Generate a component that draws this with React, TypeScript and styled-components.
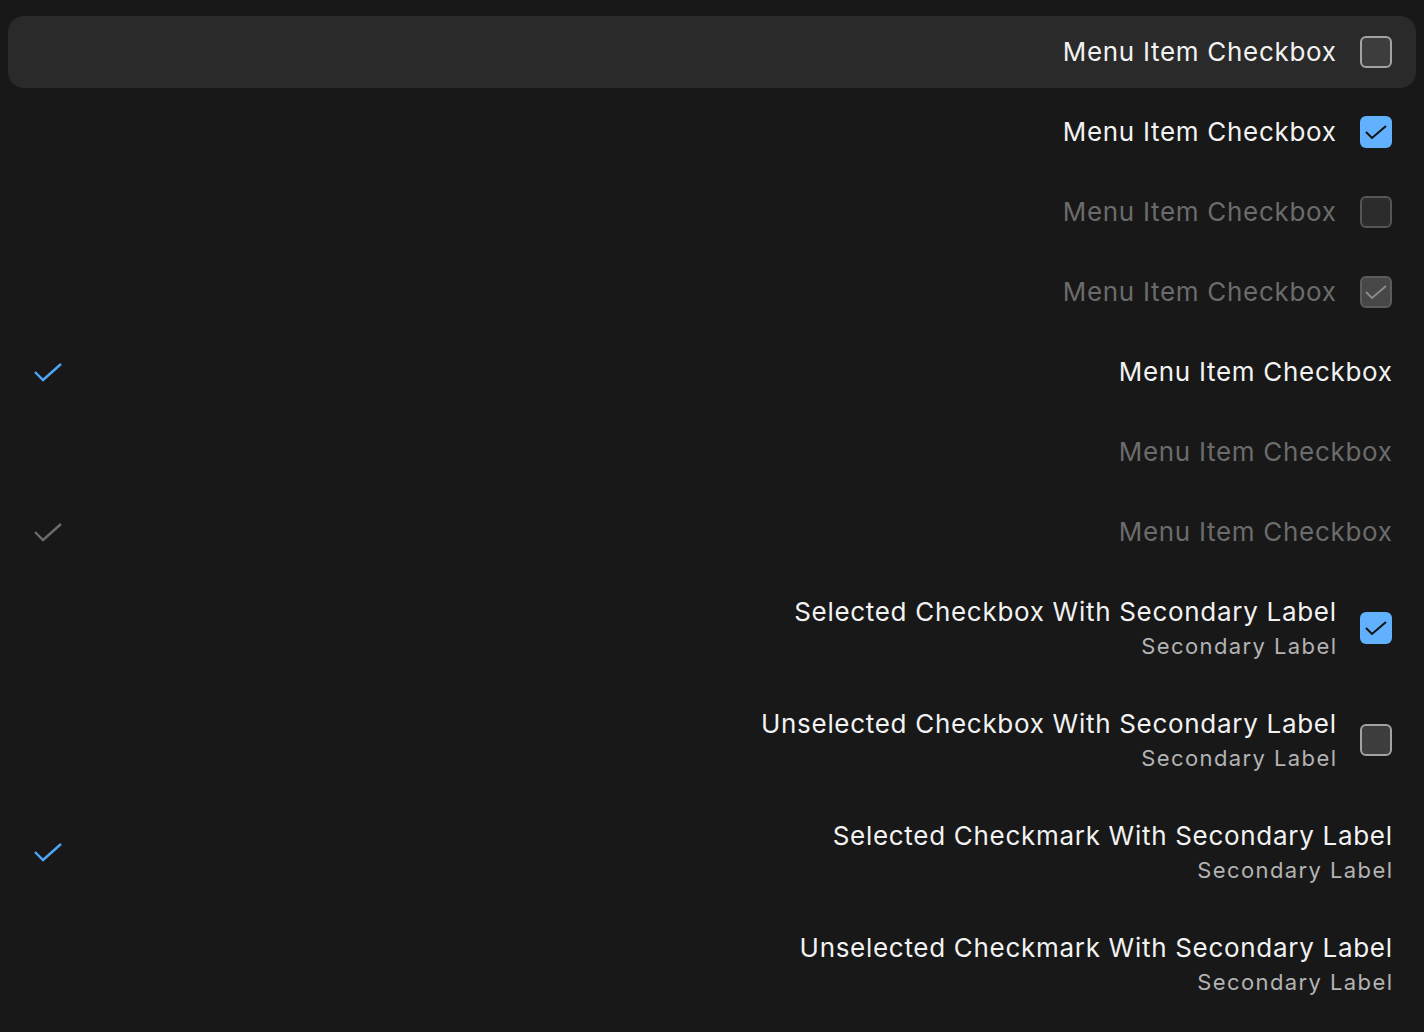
import React from "react";
import styled, { createGlobalStyle, css } from "styled-components";

const GlobalStyle = createGlobalStyle`
  html, body {
    margin: 0;
    padding: 0;
    background: #181818;
  }
  body {
    font-family: Inter, "Noto Sans", sans-serif;
  }
`;

const Menu = styled.div`
  display: flex;
  flex-direction: column;
  gap: 8px;
  padding: 16px 8px;
  min-height: 100vh;
  box-sizing: border-box;
  background: #181818;
`;

const Row = styled.div<{ $hover?: boolean; $tall?: boolean }>`
  display: flex;
  align-items: center;
  height: ${(p) => (p.$tall ? 104 : 72)}px;
  padding: 0 24px;
  border-radius: 16px;
  gap: 24px;
  ${(p) =>
    p.$hover &&
    css`
      background: #2a2a2a;
    `}
`;

const Lead = styled.div`
  width: 32px;
  height: 32px;
  flex: none;
  display: flex;
  align-items: center;
  justify-content: center;
`;

const Labels = styled.div`
  flex: 1;
  display: flex;
  flex-direction: column;
  align-items: flex-end;
  text-align: right;
`;

const Primary = styled.span<{ $disabled?: boolean }>`
  font-size: 26px;
  line-height: 36px;
  letter-spacing: 0.7px;
  margin-right: -0.7px;
  color: ${(p) => (p.$disabled ? "#6b6b6b" : "#f2f2f2")};
`;

const Secondary = styled.span`
  font-size: 22px;
  line-height: 32px;
  letter-spacing: 1.4px;
  margin-right: -1.4px;
  color: #b3b3b3;
`;

const Box = styled.div<{ $checked?: boolean; $disabled?: boolean }>`
  width: 32px;
  height: 32px;
  flex: none;
  box-sizing: border-box;
  border-radius: 6px;
  display: flex;
  align-items: center;
  justify-content: center;
  ${(p) => {
    if (p.$checked && !p.$disabled)
      return css`
        background: #62b1ff;
      `;
    if (p.$checked && p.$disabled)
      return css`
        background: #474747;
        border: 2px solid #5c5c5c;
      `;
    if (p.$disabled)
      return css`
        background: #2c2c2c;
        border: 2px solid #555555;
      `;
    return css`
      background: #3d3d3d;
      border: 2px solid #a3a3a3;
    `;
  }}
`;

const BoxCheck = ({ color }: { color: string }) => (
  <svg width="32" height="32" viewBox="0 0 32 32" style={{ flex: "none", margin: -2 }}>
    <path d="M6 16 L12 22 L26 10" fill="none" stroke={color} strokeWidth="2" />
  </svg>
);

const Mark = ({ color }: { color: string }) => (
  <svg width="32" height="32" viewBox="0 0 32 32">
    <path d="M3 16 L11 24 L29 8" fill="none" stroke={color} strokeWidth="2.4" />
  </svg>
);

type Item = {
  kind: "box" | "mark";
  checked?: boolean;
  disabled?: boolean;
  hover?: boolean;
  label: string;
  secondary?: string;
};

const items: Item[] = [
  { kind: "box", label: "Menu Item Checkbox", hover: true },
  { kind: "box", label: "Menu Item Checkbox", checked: true },
  { kind: "box", label: "Menu Item Checkbox", disabled: true },
  { kind: "box", label: "Menu Item Checkbox", disabled: true, checked: true },
  { kind: "mark", label: "Menu Item Checkbox", checked: true },
  { kind: "mark", label: "Menu Item Checkbox", disabled: true },
  { kind: "mark", label: "Menu Item Checkbox", disabled: true, checked: true },
  { kind: "box", label: "Selected Checkbox With Secondary Label", secondary: "Secondary Label", checked: true },
  { kind: "box", label: "Unselected Checkbox With Secondary Label", secondary: "Secondary Label" },
  { kind: "mark", label: "Selected Checkmark With Secondary Label", secondary: "Secondary Label", checked: true },
  { kind: "mark", label: "Unselected Checkmark With Secondary Label", secondary: "Secondary Label" },
];

const App = () => (
  <>
    <GlobalStyle />
    <Menu>
      {items.map((it, i) => (
        <Row key={i} $hover={it.hover} $tall={!!it.secondary}>
          {it.kind === "mark" && (
            <Lead>
              {it.checked && <Mark color={it.disabled ? "#6b6b6b" : "#4ea6f7"} />}
            </Lead>
          )}
          <Labels>
            <Primary $disabled={it.disabled}>{it.label}</Primary>
            {it.secondary && <Secondary>{it.secondary}</Secondary>}
          </Labels>
          {it.kind === "box" && (
            <Box $checked={it.checked} $disabled={it.disabled}>
              {it.checked && <BoxCheck color={it.disabled ? "#8a8a8a" : "#121212"} />}
            </Box>
          )}
        </Row>
      ))}
    </Menu>
  </>
);

export default App;
